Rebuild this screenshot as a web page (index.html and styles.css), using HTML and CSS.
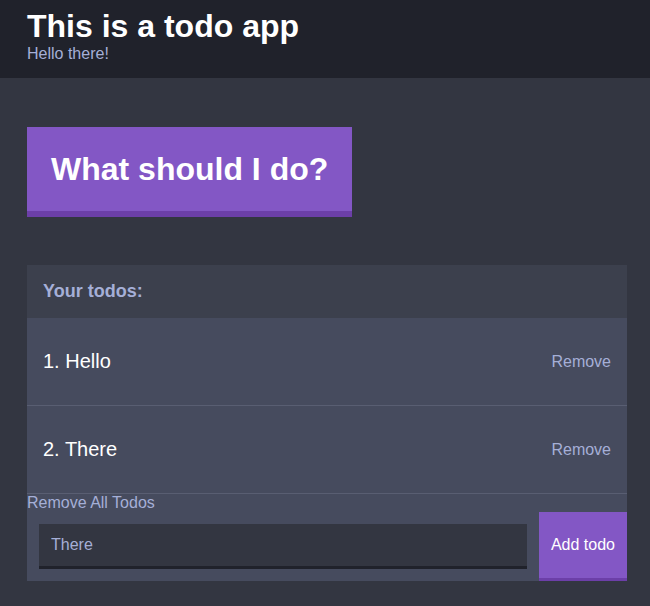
FILE: index.html
```html
<!DOCTYPE html>
<html lang="en">
<head>
<meta charset="utf-8">
<title>Todo app</title>
<link rel="stylesheet" href="styles.css">
</head>
<body>
<header class="header">
  <div class="container">
    <h1 class="header__title">This is a todo app</h1>
    <h2 class="header__subtitle">Hello there!</h2>
  </div>
</header>
<main class="container">
  <button class="big-button">What should I do?</button>
  <section class="widget">
    <div class="widget-header">
      <h3 class="widget-header__title">Your todos:</h3>
    </div>
    <div class="option">
      <p class="option__text">1. Hello</p>
      <button class="button button--link">Remove</button>
    </div>
    <div class="option">
      <p class="option__text">2. There</p>
      <button class="button button--link">Remove</button>
    </div>
    <button class="button button--link button--all">Remove All Todos</button>
    <form class="add-option">
      <input class="add-option__input" type="text" name="option" value="There">
      <button class="button button--add" type="button">Add todo</button>
    </form>
  </section>
</main>
</body>
</html>
```
FILE: styles.css
```css
* { box-sizing: border-box; }
html, body { margin: 0; padding: 0; }
body {
  background: #333641;
  font-family: "Liberation Sans", Arial, Helvetica, sans-serif;
  color: #ffffff;
  height: 606px;
  overflow: hidden;
}
.container {
  width: 600px;
  margin-left: 27px;
}
.header {
  background: #20222b;
  padding: 8px 0 15px;
}
.header__title {
  margin: 0;
  font-size: 32px;
  line-height: 37px;
  font-weight: bold;
  color: #ffffff;
}
.header__subtitle {
  margin: 0;
  font-size: 16px;
  line-height: 18px;
  font-weight: normal;
  color: #a5afd7;
}
.big-button {
  display: block;
  margin: 49px 0 48px;
  padding: 0 24px;
  height: 90px;
  background: #8357c5;
  border: none;
  border-bottom: 6px solid #6c3fa8;
  color: #ffffff;
  font-family: inherit;
  font-size: 32px;
  font-weight: bold;
  line-height: 37px;
}
.widget {
  background: #464b5e;
}
.widget-header {
  background: #3c404d;
  padding: 16px;
  height: 53px;
}
.widget-header__title {
  margin: 0;
  font-size: 18px;
  line-height: 21px;
  font-weight: bold;
  color: #a5afd7;
}
.option {
  display: flex;
  align-items: center;
  justify-content: space-between;
  padding: 0 16px;
  height: 88px;
  border-bottom: 1px solid #595e72;
}
.option__text {
  margin: 0;
  font-size: 20px;
  line-height: 23px;
  color: #ffffff;
}
.button {
  font-family: inherit;
  font-size: 16px;
  border: none;
  cursor: pointer;
}
.button--link {
  background: none;
  padding: 0;
  color: #a5afd7;
  line-height: 18px;
}
.button--all {
  display: block;
}
.add-option {
  display: flex;
  margin: 0;
}
.add-option__input {
  flex: 1;
  min-width: 0;
  margin: 12px;
  height: 45px;
  padding: 0 12px;
  background: #333641;
  border: none;
  border-bottom: 3px solid #20222b;
  color: #a5afd7;
  font-family: inherit;
  font-size: 16px;
  outline: none;
}
.button--add {
  flex: none;
  padding: 0 12px;
  white-space: nowrap;
  background: #8357c5;
  border-bottom: 3px solid #6c3fa8;
  color: #ffffff;
  line-height: 18px;
}
```
